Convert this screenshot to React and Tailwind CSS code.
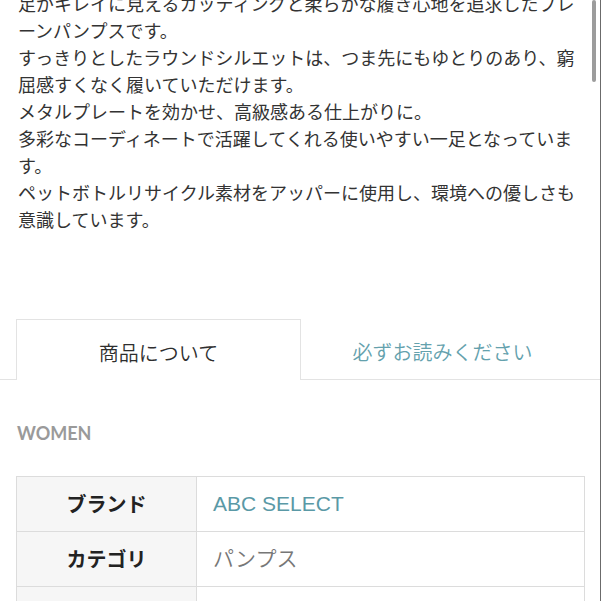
const lines = [
    '足がキレイに見えるカッティングと柔らかな履き心地を追求したプレ',
    'ーンパンプスです。',
    'すっきりとしたラウンドシルエットは、つま先にもゆとりのあり、窮',
    '屈感すくなく履いていただけます。',
    'メタルプレートを効かせ、高級感ある仕上がりに。',
    '多彩なコーディネートで活躍してくれる使いやすい一足となっていま',
    'す。',
    'ペットボトルリサイクル素材をアッパーに使用し、環境への優しさも',
    '意識しています。',
];

const specs = [
    { label: 'ブランド', value: 'ABC SELECT', link: true },
    { label: 'カテゴリ', value: 'パンプス', link: false },
    { label: '素材', value: '合成皮革', link: false },
];

export default function App() {
    return (
        <div
            className="relative h-[601px] w-[601px] overflow-hidden border-r border-[#6b6b6b] bg-white"
            style={{ fontFamily: '"Noto Sans CJK JP", "Noto Sans", sans-serif' }}
        >
            <div className="mt-[-10px] px-[18px] text-[18px] leading-[27px] text-[#333]">
                {lines.map((line, i) => (
                    <p key={i} className="whitespace-nowrap">
                        {line}
                    </p>
                ))}
            </div>

            <div className="mt-[86px] flex border-b border-[#e3e3e3] px-4">
                <div className="-mb-px flex-1 border border-b-0 border-[#e3e3e3] bg-white pt-[18px] pb-[12px] text-center text-[20px] font-[350] leading-[30px] text-[#2e2e2e]">
                    商品について
                </div>
                <div className="flex-1 pt-[18px] pb-[12px] text-center text-[20px] font-[350] leading-[30px] text-[#64a1ad]">
                    必ずお読みください
                </div>
            </div>

            <p
                className="mt-[41px] px-[17px] text-[18px] font-bold leading-[24px] text-[#9a9a9a]"
                style={{ fontFamily: 'Lato, "Noto Sans", sans-serif' }}
            >
                WOMEN
            </p>

            <table className="mx-4 mt-[31px] w-[569px] border-collapse">
                <tbody>
                    {specs.map((row) => (
                        <tr key={row.label} className="h-[55px]">
                            <th className="w-[180px] border border-[#dcdcdc] bg-[#f6f6f6] text-center text-[20px] font-bold text-[#222]">
                                {row.label}
                            </th>
                            <td
                                className={`border border-[#dcdcdc] pl-4 text-[21px] font-[350] ${row.link ? 'text-[#5a99a6]' : 'text-[#777]'}`}
                                style={{ fontFamily: '"Liberation Sans", "Noto Sans CJK JP", sans-serif' }}
                            >
                                {row.value}
                            </td>
                        </tr>
                    ))}
                </tbody>
            </table>

            <div className="absolute top-0 right-[4px] h-[82px] w-[4px] rounded-full bg-[#9c9c9c]" />
        </div>
    );
}
